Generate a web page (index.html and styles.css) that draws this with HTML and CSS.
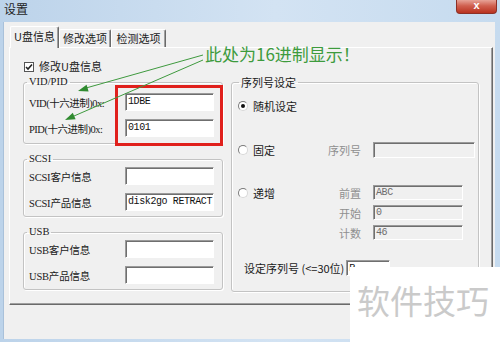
FILE: index.html
```html
<!DOCTYPE html>
<html lang="zh-CN">
<head>
  <meta charset="UTF-8" />
  <title>设置</title>
  <link rel="stylesheet" href="styles.css">
</head>
<body>

<div class="window">
  <!-- Title bar -->
  <div class="titlebar">
    <span class="title">设置</span>
    <span class="close">x</span>
  </div>

  <div class="client">
    <div class="tabs">
      <span class="tab active">U盘信息</span>
      <span class="tab">修改选项</span>
      <span class="tab">检测选项</span>
    </div>

    <div class="panel">
      <!-- Left column -->
      <div class="col-left">
        <label class="check-row">
          <span class="checkbox">
            <svg width="8" height="8" viewBox="0 0 8 8"><path d="M1 4 L3 6 L7 1.5" fill="none" stroke="#222" stroke-width="1.6"/></svg>
          </span>
          修改U盘信息
        </label>

        <fieldset class="group g-vid">
          <legend>VID/PID</legend>
          <div class="field hex"><span>VID(十六进制)0x:</span><span class="input">1DBE</span></div>
          <div class="field hex"><span>PID(十六进制)0x:</span><span class="input">0101</span></div>
        </fieldset>

        <fieldset class="group g-scsi">
          <legend>SCSI</legend>
          <div class="field"><span>SCSI客户信息</span><span class="input"></span></div>
          <div class="field"><span>SCSI产品信息</span><span class="input">disk2go RETRACT</span></div>
        </fieldset>

        <fieldset class="group g-usb">
          <legend>USB</legend>
          <div class="field"><span>USB客户信息</span><span class="input"></span></div>
          <div class="field"><span>USB产品信息</span><span class="input"></span></div>
        </fieldset>
      </div>

      <!-- Serial number -->
      <fieldset class="group serial">
        <legend>序列号设定</legend>

        <div class="row r-random">
          <span class="radio checked"></span>随机设定
        </div>

        <div class="row r-fixed">
          <span class="opt"><span class="radio"></span>固定</span>
          <span class="sub-label">序列号</span>
          <span class="input off wide"></span>
        </div>

        <div class="row r-incr">
          <span class="opt"><span class="radio"></span>递增</span>
          <div class="subrows">
            <div class="sub"><span class="sub-label">前置</span><span class="input off">ABC</span></div>
            <div class="sub"><span class="sub-label">开始</span><span class="input off">0</span></div>
            <div class="sub"><span class="sub-label">计数</span><span class="input off">46</span></div>
          </div>
        </div>

        <div class="row r-set">
          设定序列号 (&lt;=30位)<span class="input short">P</span>
        </div>
      </fieldset>
    </div>
  </div>

  <!-- Annotations drawn over the screenshot -->
  <div class="mark-box"></div>
  <div class="note">此处为16进制显示！</div>
  <svg class="arrows" width="500" height="342" viewBox="0 0 500 342">
    <line x1="203" y1="55" x2="86" y2="88" stroke="#3f9a3f" stroke-width="1"/>
    <polygon points="78,91 88.6,91.6 86.6,84.8" fill="#2f8a2f"/>
    <line x1="203" y1="60" x2="74" y2="116" stroke="#3f9a3f" stroke-width="1"/>
    <polygon points="65,120 75.6,119.2 72.8,112.8" fill="#2f8a2f"/>
  </svg>
  <div class="watermark">软件技巧</div>
</div>

</body>
</html>
```

FILE: styles.css
```css
/* Base */
body {
  margin: 0;
  width: 500px;
  height: 342px;
  overflow: hidden;
  font-family: "Liberation Sans", "Noto Sans CJK SC", sans-serif;
  font-size: 11px;
  color: #1a1a1a;
}

.window {
  position: relative;
  height: 342px;
  background: linear-gradient(90deg, #bcd3ea, #d3e3f3 55%, #c6dbef);
}

/* Title bar */
.titlebar {
  display: flex;
  align-items: flex-start;
  height: 22px;
}

.title {
  padding: 2px 0 0 4px;
  font-size: 12px;
  line-height: 16px;
  color: #1e1e1e;
}

.close {
  margin-left: auto;
  margin-right: 3px;
  width: 41px;
  height: 14px;
  box-sizing: border-box;
  border: 1px solid #8c3026;
  border-top: none;
  border-radius: 0 0 4px 4px;
  background: linear-gradient(#e7a397, #d0604f 45%, #b9321f);
  color: #fff;
  font-weight: bold;
  font-size: 11px;
  line-height: 11px;
  text-align: center;
}

/* Client area */
.client {
  margin: 0 5px 0 3px;
  height: 317px;
  padding: 4px 2px 0 5px;
  box-sizing: border-box;
  background: #f0f0f0;
  border-left: 1px solid #a9c1da;
}

.tabs {
  display: flex;
  align-items: flex-end;
  height: 21px;
  margin-left: 1px;
}

.tab {
  height: 18px;
  padding: 0 2px;
  box-sizing: border-box;
  border-top: 1px solid #fff;
  border-left: 1px solid #fff;
  border-right: 1px solid #6a6a6a;
  border-radius: 2px 2px 0 0;
  box-shadow: inset -1px 0 #a0a0a0;
  background: #f0f0f0;
  font-family: "Noto Sans CJK SC", sans-serif;
  font-size: 11px;
  line-height: 16px;
  text-align: center;
  white-space: nowrap;
}

.tab.active {
  position: relative;
  z-index: 1;
  height: 22px;
  margin-bottom: -1px;
  width: 49px;
  line-height: 18px;
}

.tab:nth-child(2) { width: 52px; }
.tab:nth-child(3) { width: 55px; }

.panel {
  display: flex;
  gap: 8px;
  height: 258px;
  padding: 12px 0 0 13px;
  box-sizing: border-box;
  border: 1px solid;
  border-color: #fff #6a6a6a #6a6a6a #fff;
  box-shadow: inset -1px -1px #a0a0a0;
}

/* Left column */
.col-left {
  display: flex;
  flex-direction: column;
  width: 200px;
}

.check-row {
  display: flex;
  align-items: center;
  gap: 5px;
  height: 13px;
  margin: 0 0 3px 1px;
  font-family: "Noto Sans CJK SC", sans-serif;
  line-height: 13px;
}

.checkbox {
  display: flex;
  align-items: center;
  justify-content: center;
  width: 10px;
  height: 10px;
  box-sizing: border-box;
  border: 1px solid #555;
  background: #fff;
}

/* Group boxes */
.group {
  margin: 0;
  min-width: 0;
  border: 1px solid #c3c3c3;
  border-radius: 3px;
  box-shadow: inset 1px 1px #fff, 1px 1px #fff;
}

.group legend {
  padding: 0 2px;
  margin-left: -2px;
  line-height: 12px;
  font-family: "Liberation Serif", "Noto Sans CJK SC", serif;
  font-size: 10.5px;
}

.col-left .group {
  display: flex;
  flex-direction: column;
  gap: 8px;
  width: 200px;
  box-sizing: border-box;
  padding: 2px 8px 5px 5px;
}

.col-left .group + .group {
  margin-top: 9px;
}

.g-vid {
  padding-top: 5px !important;
  padding-bottom: 6px !important;
}

.field {
  display: flex;
  align-items: center;
  justify-content: space-between;
  height: 18px;
  font-family: "Liberation Serif", "Noto Sans CJK SC", serif;
  font-size: 10.5px;
  letter-spacing: -0.2px;
}

.field.hex {
  letter-spacing: -0.5px;
}

/* Inputs */
.input {
  display: block;
  width: 89px;
  height: 18px;
  padding: 0 2px;
  box-sizing: border-box;
  border: 1px solid;
  border-color: #9a9a9a #fff #fff #9a9a9a;
  box-shadow: inset 1px 1px #6f6f6f;
  background: #fff;
  font-family: "Liberation Mono", monospace;
  font-size: 10px;
  letter-spacing: -0.4px;
  line-height: 16px;
  color: #111;
  white-space: nowrap;
  overflow: hidden;
}

.input.off {
  width: 90px;
  height: 15px;
  line-height: 13px;
  background: #f0f0f0;
  color: #6d6d6d;
}

.input.wide {
  width: 102px;
  height: 16px;
}

.input.short {
  width: 44px;
  height: 16px;
  margin-left: 2px;
  line-height: 15px;
}

/* Serial number group */
.serial {
  width: 248px;
  height: 216px;
  margin-top: 16px;
  box-sizing: border-box;
  padding: 11px 3px 14px 6px;
  font-family: "Noto Sans CJK SC", sans-serif;
}

.serial legend {
  margin-left: 1px;
  font-family: "Noto Sans CJK SC", sans-serif;
  font-size: 11px;
}

.row {
  display: flex;
  align-items: center;
  line-height: 14px;
}

.r-random { height: 14px; }
.r-fixed { height: 16px; margin-top: 29px; }
.r-incr { align-items: flex-start; margin-top: 27px; }
.r-set { height: 16px; margin-top: 20px; padding-left: 6px; }

.opt {
  display: flex;
  align-items: center;
  width: 90px;
  height: 15px;
}

.radio {
  position: relative;
  width: 10px;
  height: 10px;
  margin-right: 5px;
  box-sizing: border-box;
  border: 1px solid;
  border-color: #7a7a7a #d8d8d8 #d8d8d8 #7a7a7a;
  border-radius: 50%;
  background: #fff;
}

.radio.checked::after {
  content: "";
  position: absolute;
  left: 2px;
  top: 2px;
  width: 4px;
  height: 4px;
  border-radius: 50%;
  background: #111;
}

.sub-label {
  width: 33px;
  margin-right: 12px;
  text-align: right;
  color: #8f8f8f;
}

.subrows {
  display: flex;
  flex-direction: column;
  gap: 5px;
}

.sub {
  display: flex;
  align-items: center;
  height: 15px;
}

/* Annotation overlay */
.mark-box {
  position: absolute;
  left: 115px;
  top: 85px;
  width: 108px;
  height: 61px;
  box-sizing: border-box;
  border: 3px solid #e0201c;
}

.note {
  position: absolute;
  left: 205px;
  top: 43px;
  font-family: "Noto Sans CJK SC", sans-serif;
  font-size: 17px;
  line-height: 22px;
  color: #3d9b3d;
}

.arrows {
  position: absolute;
  left: 0;
  top: 0;
  pointer-events: none;
}

.watermark {
  position: absolute;
  left: 350px;
  top: 267px;
  width: 150px;
  height: 75px;
  padding: 12px 0 0 7px;
  box-sizing: border-box;
  background: #fff;
  font-family: "Noto Sans CJK SC", sans-serif;
  font-size: 33px;
  line-height: 42px;
  color: #cacaca;
}
```
